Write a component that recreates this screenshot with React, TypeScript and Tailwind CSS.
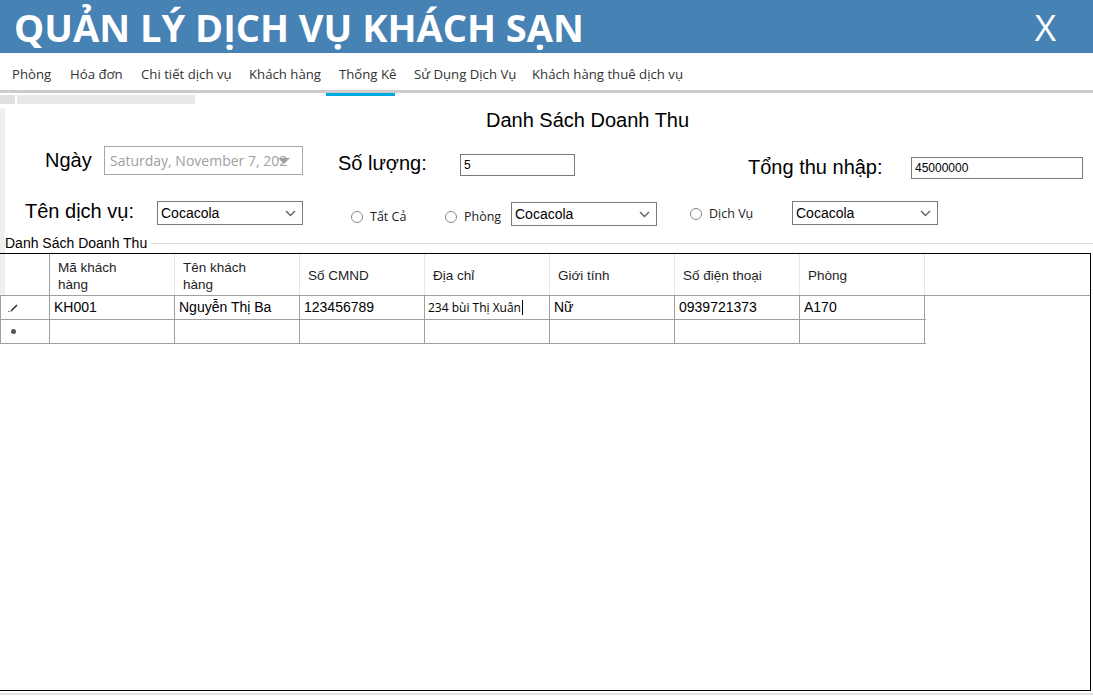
import React from "react";

const segoe = "font-['Open_Sans','Noto_Sans',sans-serif]";
const arial = "font-['Liberation_Sans',Arial,sans-serif]";

const tabs = [
	{ label: "Phòng", w: "w-[58px]" },
	{ label: "Hóa đơn", w: "w-[71px]" },
	{ label: "Chi tiết dịch vụ", w: "w-[108px]" },
	{ label: "Khách hàng", w: "w-[90px]" },
	{ label: "Thống Kê", w: "w-[75px]", active: true },
	{ label: "Sử Dụng Dịch Vụ", w: "w-[118px]" },
	{ label: "Khách hàng thuê dịch vụ", w: "w-[170px]" },
];

const columns = [
	["Mã khách", "hàng"],
	["Tên khách", "hàng"],
	["Số CMND"],
	["Địa chỉ"],
	["Giới tính"],
	["Số điện thoại"],
	["Phòng"],
];

const row = ["KH001", "Nguyễn Thị Ba", "123456789", "234 bùi Thị Xuân", "Nữ", "0939721373", "A170"];

const Chevron = () => (
	<svg width="11" height="7" viewBox="0 0 11 7" className="shrink-0">
		<path d="M1 1 L5.5 5.5 L10 1" fill="none" stroke="#606060" strokeWidth="1.4" />
	</svg>
);

const Select = ({ w }: { w: string }) => (
	<div className={`${w} h-[24px] border border-[#7a7a7a] bg-white flex items-center justify-between pl-[3px] pr-[6px]`}>
		<span className={`${arial} text-[14px] text-black`}>Cocacola</span>
		<Chevron />
	</div>
);

const Radio = ({ label, w, mt }: { label: string; w: string; mt: string }) => (
	<div className={`${w} ${mt} flex items-center gap-[7px]`}>
		<span className="w-[12px] h-[12px] rounded-full border border-[#8a8a8a] bg-white" />
		<span className={`${segoe} text-[12.5px] leading-[16px] text-[#222]`}>{label}</span>
	</div>
);

export default function App() {
	return (
		<div className="w-[1093px] h-[698px] bg-white overflow-hidden">
			{/* title bar */}
			<div className="h-[53px] bg-[#4682b4] flex items-center justify-between pl-[14px] pr-[37px]">
				<h1 className={`${segoe} text-[38px] font-bold text-white leading-none`}>QUẢN LÝ DỊCH VỤ KHÁCH SẠN</h1>
				<span className={`${segoe} text-[37px] text-white leading-none`}>X</span>
			</div>

			{/* tabs */}
			<div className="h-[40px] border-b-[3px] border-[#cccccc] flex items-center pl-[12px] pt-[3px]">
				{tabs.map((t) => (
					<div key={t.label} className={`${t.w} relative`}>
						<span className={`${segoe} text-[13.2px] text-[#333] whitespace-nowrap`}>{t.label}</span>
						{t.active && <span className="absolute left-[-13px] w-[69px] h-[3px] bottom-[-11px] bg-[#00a9db]" />}
					</div>
				))}
			</div>

			<div className="mt-[2px] flex h-[9px]">
				<div className="w-[15px] bg-[#e0e0e0]" />
				<div className="ml-[2px] w-[178px] bg-[#e8e8e8]" />
			</div>

			{/* form */}
			<div className="border-l-[5px] border-[#f0f0f0]">
				<div className={`${arial} mt-[4px] h-[24px] leading-[24px] text-[20px] text-black pl-[481px]`}>Danh Sách Doanh Thu</div>

				<div className={`${arial} h-[47px] flex items-start pl-[40px] text-[20px] text-black`}>
					<div className="w-[59px] mt-[16px] leading-[24px]">Ngày</div>
					<div className="w-[199px] h-[29px] mt-[14px] border border-[#a8a8a8] flex items-center pl-[5px]">
						<span className={`${segoe} text-[14px] text-[#a0a0a0] whitespace-nowrap`}>Saturday, November 7, 202</span>
						<svg width="12" height="6" viewBox="0 0 12 6" className="-ml-[9px]">
							<path d="M0 0 H12 L6 6 Z" fill="#a0a0a0" />
						</svg>
					</div>
					<div className="w-[35px]" />
					<div className="w-[122px] mt-[19px] leading-[24px]">Số lượng:</div>
					<div className="w-[115px] h-[22px] mt-[22px] border border-[#7a7a7a] text-[12px] leading-[20px] pl-[3px]">5</div>
					<div className="w-[173px]" />
					<div className="w-[163px] mt-[23px] leading-[24px]">Tổng thu nhập:</div>
					<div className="w-[172px] h-[22px] mt-[25px] border border-[#7a7a7a] text-[12px] leading-[20px] pl-[3px]">45000000</div>
				</div>

				<div className="h-[54px] flex items-start pl-[20px]">
					<div className={`${arial} w-[132px] mt-[20px] leading-[24px] text-[20px] text-black`}>Tên dịch vụ:</div>
					<div className="mt-[22px]">
						<Select w="w-[146px]" />
					</div>
					<div className="w-[48px]" />
					<Radio label="Tất Cả" w="w-[94px]" mt="mt-[30px]" />
					<Radio label="Phòng" w="w-[66px]" mt="mt-[30px]" />
					<div className="mt-[23px]">
						<Select w="w-[146px]" />
					</div>
					<div className="w-[33px]" />
					<Radio label="Dịch Vụ" w="w-[102px]" mt="mt-[27px]" />
					<div className="mt-[22px]">
						<Select w="w-[146px]" />
					</div>
				</div>

				<div className="h-[20px] flex items-center">
					<span className={`${arial} text-[14px] leading-[14px] text-black pr-[4px]`}>Danh Sách Doanh Thu</span>
					<div className="flex-1 h-px bg-[#dcdcdc]" />
				</div>
			</div>

			{/* grid */}
			<div className="w-[1091px] h-[438px] border-t border-r border-b border-black">
				<div className="flex h-[42px] border-b border-[#a0a0a0]">
					<div className="w-[50px] border-l-[5px] border-l-[#f0f0f0] border-r border-r-[#a0a0a0]" />
					{columns.map((c, i) => (
						<div key={i} className={`${arial} w-[125px] border-r border-[#e2e8ef] flex flex-col justify-center pl-[8px] pt-[2px] text-[13.5px] leading-[17px] text-[#1e1e1e]`}>
							{c.map((l) => (
								<span key={l}>{l}</span>
							))}
						</div>
					))}
				</div>
				<div className="flex h-[24px] border-b border-[#a0a0a0] w-[926px]">
					<div className="w-[50px] border-l border-[#a0a0a0] border-r flex items-center pl-[6px]">
						<svg width="12" height="10" viewBox="0 0 12 10">
							<path d="M4 8 L10 2" stroke="#333" strokeWidth="1.6" />
							<rect x="1" y="8" width="1" height="1" fill="#777" />
							<rect x="2.5" y="8" width="1" height="1" fill="#777" />
						</svg>
					</div>
					{row.map((v, i) =>
						i === 3 ? (
							<div key={i} className="w-[125px] border-r border-[#a0a0a0] flex items-center pl-[3px]">
								<span className={`${segoe} text-[12px] text-black`}>{v}</span>
								<span className="w-px h-[15px] bg-black ml-[1px]" />
							</div>
						) : (
							<div key={i} className={`${arial} w-[125px] border-r border-[#a0a0a0] flex items-center pl-[4px] text-[14px] text-black`}>
								{v}
							</div>
						)
					)}
				</div>
				<div className="flex h-[24px] border-b border-[#a0a0a0] w-[926px]">
					<div className="w-[50px] border-l border-[#a0a0a0] border-r flex items-center pl-[10px]">
						<span className="w-[5px] h-[5px] rounded-full bg-[#555]" />
					</div>
					{row.map((_, i) => (
						<div key={i} className="w-[125px] border-r border-[#a0a0a0]" />
					))}
				</div>
			</div>
			<div className="mt-[2px] h-[2px] bg-[#e3e3e3]" />
		</div>
	);
}
